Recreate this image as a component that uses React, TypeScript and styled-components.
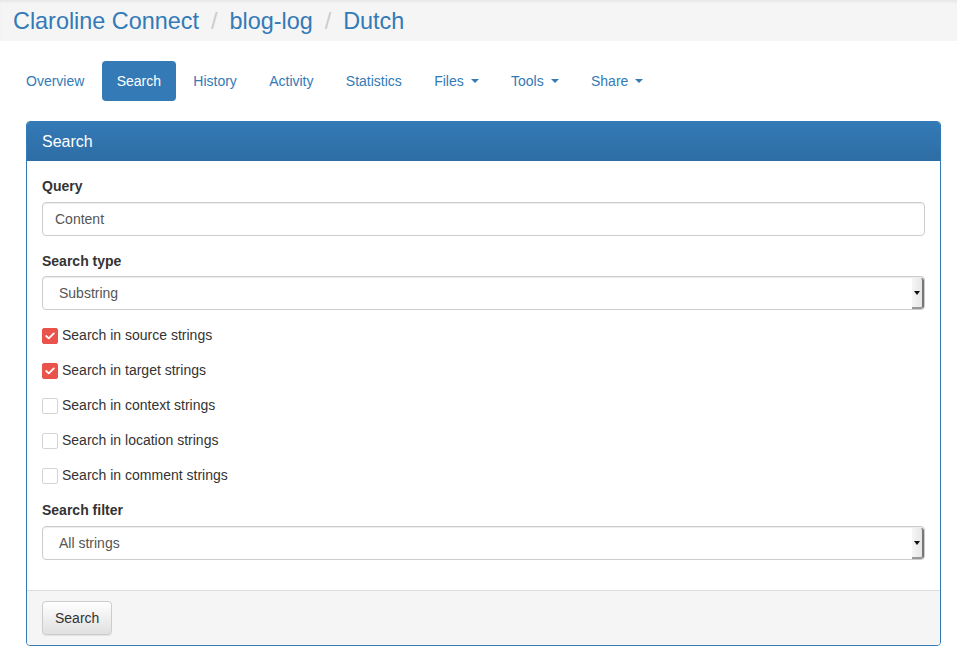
import styled, { createGlobalStyle } from "styled-components";

const GlobalStyle = createGlobalStyle`
    body {
        margin: 0;
        background: #fff;
        font-family: "Liberation Sans", Arial, sans-serif;
        font-size: 14px;
        line-height: 20px;
        color: #333;
    }
    * { box-sizing: border-box; }
`

const TopBar = styled.div`
    height: 41px;
    background: #f5f5f5;
    box-shadow: inset 0 3px 3px -1px rgba(0, 0, 0, 0.06);
    display: flex;
    align-items: center;
    padding: 0 13px;
    font-size: 23.4px;
    line-height: 28px;
    color: #337ab7;
`

const Crumb = styled.span`
    color: #337ab7;
`

const Slash = styled.span`
    color: #ccc;
    margin: 0 12px;
`

const Pills = styled.ul`
    list-style: none;
    display: flex;
    gap: 2.3px;
    margin: 20px 0 0;
    padding: 0 0 0 11px;
`

const Pill = styled.li<{ $active?: boolean }>`
    display: flex;
    align-items: center;
    height: 40px;
    padding: 0 15px;
    border-radius: 4px;
    color: ${p => (p.$active ? "#fff" : "#337ab7")};
    background: ${p => (p.$active ? "#337ab7" : "transparent")};
`

const Caret = styled.span`
    display: inline-block;
    margin-left: 7px;
    border-top: 4px solid #337ab7;
    border-left: 4px solid transparent;
    border-right: 4px solid transparent;
`

const Panel = styled.div`
    margin: 20px 16px 0 26px;
    border: 1px solid #337ab7;
    border-radius: 4px;
    overflow: hidden;
`

const PanelHeading = styled.div`
    height: 39px;
    padding: 0 15px;
    display: flex;
    align-items: center;
    font-size: 16px;
    color: #fff;
    background: linear-gradient(#337ab7, #2e6da4);
`

const PanelBody = styled.div`
    padding: 15px;
    display: flex;
    flex-direction: column;
    gap: 15px;
`

const Group = styled.div<{ $gap?: number }>`
    display: flex;
    flex-direction: column;
    gap: ${p => p.$gap ?? 5}px;
`

const Label = styled.label`
    font-weight: bold;
`

const Input = styled.div`
    height: 34px;
    padding: 0 12px;
    display: flex;
    align-items: center;
    border: 1px solid #ccc;
    border-radius: 4px;
    color: #555;
    box-shadow: inset 0 1px 1px rgba(0, 0, 0, 0.075);
`

const Select = styled(Input)`
    padding: 0 0 0 16px;
    justify-content: space-between;
`

const SelectArrow = styled.span`
    align-self: stretch;
    width: 12px;
    margin: 1px 0 0;
    background: linear-gradient(90deg, #f6f6f6, #e6e6e6);
    border-right: 2px solid #777;
    border-bottom: 2px solid #999;
    border-radius: 0 3px 3px 0;
    display: flex;
    align-items: center;
    justify-content: center;
    &::after {
        content: "";
        border-top: 4px solid #111;
        border-left: 3px solid transparent;
        border-right: 3px solid transparent;
    }
`

const CheckRow = styled.div`
    display: flex;
    align-items: center;
    gap: 4px;
    height: 20px;
`

const Box = styled.span<{ $checked?: boolean }>`
    width: 16px;
    height: 16px;
    margin-top: 2px;
    border-radius: 2px;
    display: flex;
    align-items: center;
    justify-content: center;
    background: ${p => (p.$checked ? "#e9534b" : "#fff")};
    border: 1px solid ${p => (p.$checked ? "#e9534b" : "#d4d4d4")};
`

const PanelFooter = styled.div`
    margin-top: 15px;
    padding: 10px 15px;
    background: #f5f5f5;
    border-top: 1px solid #ddd;
`

const Button = styled.button`
    height: 34px;
    padding: 0 12px;
    font: inherit;
    color: #333;
    border: 1px solid #ccc;
    border-radius: 4px;
    background: linear-gradient(#fff, #e0e0e0);
    box-shadow: inset 0 1px 0 rgba(255, 255, 255, 0.15), 0 1px 1px rgba(0, 0, 0, 0.075);
`

const tabs = [
    { name: "Overview" },
    { name: "Search", active: true },
    { name: "History" },
    { name: "Activity" },
    { name: "Statistics" },
    { name: "Files", menu: true },
    { name: "Tools", menu: true },
    { name: "Share", menu: true },
]

const checks = [
    { text: "Search in source strings", on: true },
    { text: "Search in target strings", on: true },
    { text: "Search in context strings" },
    { text: "Search in location strings" },
    { text: "Search in comment strings" },
]

const Check = () => (
    <svg width="10" height="8" viewBox="0 0 10 8">
        <path d="M1.2 4 L3.8 6.4 L8.8 1.4" fill="none" stroke="#fff" strokeWidth="1.8" strokeLinecap="round" strokeLinejoin="round" />
    </svg>
)

const App = () => {
    return (
        <>
            <GlobalStyle />
            <TopBar>
                <Crumb>Claroline Connect</Crumb>
                <Slash>/</Slash>
                <Crumb>blog-log</Crumb>
                <Slash>/</Slash>
                <Crumb>Dutch</Crumb>
            </TopBar>
            <Pills>
                {tabs.map(t => (
                    <Pill key={t.name} $active={t.active}>
                        {t.name}
                        {t.menu && <Caret />}
                    </Pill>
                ))}
            </Pills>
            <Panel>
                <PanelHeading>Search</PanelHeading>
                <PanelBody>
                    <Group $gap={6}>
                        <Label>Query</Label>
                        <Input>Content</Input>
                    </Group>
                    <Group>
                        <Label>Search type</Label>
                        <Select>Substring<SelectArrow /></Select>
                    </Group>
                    {checks.map(c => (
                        <CheckRow key={c.text}>
                            <Box $checked={c.on}>{c.on && <Check />}</Box>
                            {c.text}
                        </CheckRow>
                    ))}
                    <Group $gap={6}>
                        <Label>Search filter</Label>
                        <Select>All strings<SelectArrow /></Select>
                    </Group>
                </PanelBody>
                <PanelFooter>
                    <Button>Search</Button>
                </PanelFooter>
            </Panel>
        </>
    );
}

export default App;
